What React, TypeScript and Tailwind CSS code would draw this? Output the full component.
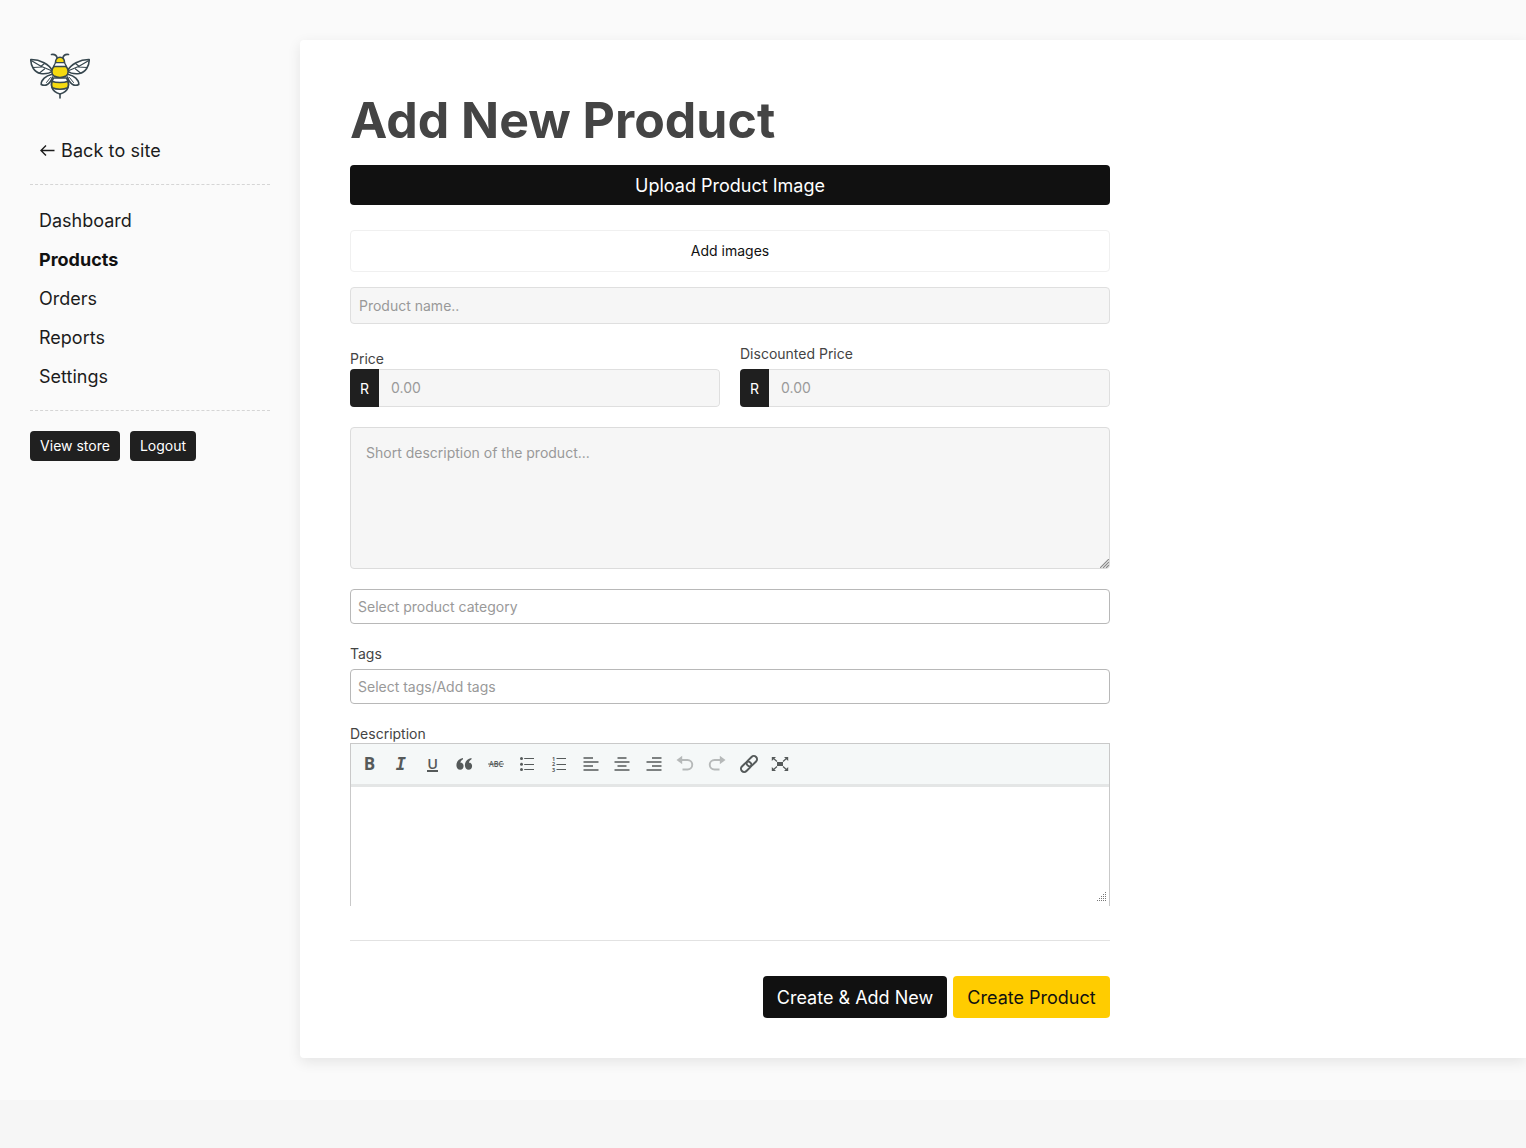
import type { ReactNode } from "react";

const navItems = ["Dashboard", "Products", "Orders", "Reports", "Settings"];

function BeeLogo() {
  return (
    <svg
      width="60"
      height="46"
      viewBox="0 0 60 46"
      fill="none"
      stroke="#37474f"
      strokeWidth="1.600"
      strokeLinecap="round"
      strokeLinejoin="round"
      aria-label="Bee"
    >
      <path d="M27.200 5C26.500 2.500 24.500 1 21.500 1.500M32.800 5C33.500 2.500 35.500 1 38.500 1.500" />
      <path d="M22.500 18C19.500 11.500 10 6.300 .8 6.500C.6 13 4.500 19.500 10.500 20.500C15 21 19.500 20.500 22.500 18Z" fill="#fff" />
      <path d="M37.500 18C40.500 11.500 50 6.300 59.200 6.500C59.400 13 55.500 19.500 49.500 20.500C45 21 40.500 20.500 37.500 18Z" fill="#fff" />
      <path d="M2 8L11 13.300L21 17.500M11 13.300L14.500 10.500M3 14.500L12 14M9.500 20L14.500 16M58 8L49 13.300L39 17.500M49 13.300L45.500 10.500M57 14.500L48 14M50.500 20L45.500 16" strokeWidth="1.200" />
      <path d="M21.500 21.500C16 22.500 11 27 11.200 31.500C15.500 33.700 20.500 31 22.500 24M38.500 21.500C44 22.500 49 27 48.800 31.500C44.500 33.700 39.500 31 37.500 24" fill="#fff" />
      <path d="M20.500 24.500L16.500 29.500M39.500 24.500L43.500 29.500" strokeWidth="1" />
      <path d="M30 45V41" />
      <path d="M23.500 25C20 31 20.500 38.500 30 41C39.500 38.500 40 31 36.500 25Z" fill="#fff" />
      <path d="M22 28.200C26 30 34 30 38 28.200C38.700 31 38.500 33 37.700 34.700C33.500 36.700 26.500 36.700 22.300 34.700C21.500 33 21.300 31 22 28.200Z" fill="#f5da10" />
      <path d="M24 13.300C21.200 16 21 21 24 23C27.500 24.800 32.500 24.800 36 23C39 21 38.800 16 36 13.300Z" fill="#f5da10" />
      <path d="M25.500 9.700C25.500 6.300 27.200 4.300 30 4.300S34.500 6.300 34.500 9.700Z" fill="#f5da10" />
      <path d="M25.500 9.700H34.500L36.500 13.500H23.500Z" fill="#fff" strokeWidth="1.300" />
    </svg>
  );
}

function Glyph({ children, muted = false }: { children: ReactNode; muted?: boolean }) {
  return (
    <button
      type="button"
      className={`flex h-8 w-[31.6px] shrink-0 items-center justify-center ${muted ? "text-[#b6b9b9]" : "text-[#555a5a]"}`}
    >
      <svg
        width="20"
        height="20"
        viewBox="0 0 20 20"
        fill="none"
        stroke="currentColor"
        strokeWidth="1.700"
        className="overflow-visible"
      >
        {children}
      </svg>
    </button>
  );
}

function LetterGlyph({ letter, className }: { letter: string; className: string }) {
  return (
    <button type="button" className="flex h-8 w-[31.6px] shrink-0 items-center justify-center text-[#555a5a]">
      <span className={className}>{letter}</span>
    </button>
  );
}

function Toolbar() {
  return (
    <div className="flex h-[43px] items-center border-b-[3px] border-[#e4e6e6] bg-[#f5f8f8] pl-[2.600px]">
      <LetterGlyph letter="B" className="font-['Open_Sans',sans-serif] text-[17px] leading-6 font-bold" />
      <LetterGlyph letter="I" className="font-['DejaVu_Sans_Mono',monospace] text-[17px] leading-6 font-bold italic" />
      <LetterGlyph
        letter="U"
        className="mt-px h-[14px] border-b-2 border-[#555a5a] font-['Open_Sans',sans-serif] text-[14.5px] leading-[11px] font-semibold"
      />
      <Glyph>
        <path
          d="M9 4V5.200C7.500 6 6.600 7.300 6.400 8.700C8.300 8.400 9.600 9.900 9.600 11.900C9.600 14.200 8.200 15.700 6.200 15.700C3.900 15.700 2.400 13.800 2.400 11.200C2.400 7.500 5 4.700 9 4ZM17.500 4V5.200C16 6 15.100 7.300 14.900 8.700C16.800 8.400 18.100 9.900 18.100 11.900C18.100 14.200 16.700 15.700 14.700 15.700C12.400 15.700 10.900 13.800 10.900 11.200C10.900 7.500 13.500 4.700 17.500 4Z"
          fill="currentColor"
          stroke="none"
        />
      </Glyph>
      <Glyph>
        <text x="10" y="12.800" textAnchor="middle" fontFamily="Open Sans" fontWeight="600" fontSize="8" textLength="14" lengthAdjust="spacingAndGlyphs" fill="currentColor" stroke="none">ABC</text>
        <path d="M2 10H18" strokeWidth="0.900" />
      </Glyph>
      <Glyph>
        <path d="M7.200 4.500H17M7.200 10.500H17M7.200 15.500H17" strokeWidth="1.100" />
        <g fill="currentColor" stroke="none">
          <circle cx="4.500" cy="4.500" r="1.500" />
          <circle cx="4.500" cy="10.300" r="1.500" />
          <circle cx="4.500" cy="15.500" r="1.500" />
        </g>
      </Glyph>
      <Glyph>
        <path d="M7.500 4.500H17M7.500 10.500H17M7.500 15.500H17" strokeWidth="1.100" />
        <g fill="currentColor" stroke="none" fontFamily="Open Sans" fontWeight="700" fontSize="5.500">
          <text x="3" y="6.500">1</text>
          <text x="3" y="12.200">2</text>
          <text x="3" y="17.900">3</text>
        </g>
      </Glyph>
      <Glyph>
        <path d="M2.500 4H12M2.500 8H17.500M2.500 12H12M2.500 16H17.500" />
      </Glyph>
      <Glyph>
        <path d="M5.500 4H14.500M2.500 8H17.500M5.500 12H14.500M2.500 16H17.500" />
      </Glyph>
      <Glyph>
        <path d="M8 4H17.500M2.500 8H17.500M8 12H17.500M2.500 16H17.500" />
      </Glyph>
      <Glyph muted>
        <path d="M6 6H12.500A4.700 4.700 0 0 1 12.500 15.500H7.500" strokeWidth="1.900" />
        <path d="M7.200 1.800V10.200L1.500 6Z" fill="currentColor" stroke="none" />
      </Glyph>
      <Glyph muted>
        <path d="M14 6H7.500A4.700 4.700 0 0 0 7.500 15.500H12.500" strokeWidth="1.900" />
        <path d="M12.800 1.800V10.200L18.500 6Z" fill="currentColor" stroke="none" />
      </Glyph>
      <Glyph>
        <g transform="rotate(-45 10 10)" strokeWidth="2">
          <rect x="0" y="6.800" width="12" height="6.400" rx="3.200" />
          <rect x="8" y="6.800" width="12" height="6.400" rx="3.200" />
        </g>
      </Glyph>
      <Glyph>
        <path d="M3 4L7 7.500M17 4L13 7.500M3 16L7 12.500M17 16L13 12.500" strokeWidth="1.200" />
        <path d="M7 8H13V12H7ZM1.800 3H6L1.800 7ZM18.200 3H14L18.200 7ZM1.800 17H6L1.800 13ZM18.200 17H14L18.200 13Z" fill="currentColor" stroke="none" />
      </Glyph>
    </div>
  );
}

function PriceField({ label, className }: { label: string; className: string }) {
  return (
    <div className="flex flex-1 flex-col">
      <label className={`h-[15px] text-sm leading-5 ${className}`}>{label}</label>
      <div className="mt-auto flex h-[38px] overflow-hidden rounded">
        <span className="flex w-[29px] items-center justify-center bg-[#1f1f1f] pt-0.5 text-sm text-white">R</span>
        <span className="flex flex-1 items-center rounded-r border border-l-0 border-[#dfdfdf] bg-[#f6f6f6] pl-3 text-sm text-[#9a9a9a]">
          0.00
        </span>
      </div>
    </div>
  );
}

function SelectBox({ text }: { text: string }) {
  return (
    <div className="flex h-[35px] items-center rounded border border-[#b8b8b8] bg-white pl-[7px] text-sm text-[#999]">
      {text}
    </div>
  );
}

function ResizeGrip() {
  return (
    <svg width="10" height="10" viewBox="0 0 10 10" stroke="#777" strokeWidth="1" strokeDasharray="1 1">
      <path d="M8 .5H10M6 2.500H10M4 4.500H10M2 6.500H10M0 8.500H10" />
    </svg>
  );
}

export default function App() {
  return (
    <div className="h-[1148px] w-[1526px] overflow-hidden bg-[#f6f6f6] font-['Inter',sans-serif] text-[#444]">
      <div className="flex h-[1100px] bg-[#fafafa] pt-10">
        <aside className="w-[300px] shrink-0 px-[30px] pt-[13px] text-lg text-[#1c1c1c]">
          <BeeLogo />
          <a className="mt-[38px] flex h-[27px] items-center pl-[9px]">
            <svg width="16" height="16" viewBox="0 0 16 16" fill="none" stroke="currentColor" strokeWidth="1.400" className="mr-[6px]">
              <path d="M15.500 7.500H2M7 2.500L2 7.500L7 12.500" />
            </svg>
            <span className="tracking-[0.1px]">Back to site</span>
          </a>
          <div className="mt-[20px] border-t border-dashed border-[#d5d5d5]" />
          <nav className="mt-[16px] flex flex-col pl-[9px]">
            {navItems.map((item) => (
              <a
                key={item}
                className={`flex h-[39px] items-center ${item === "Products" ? "font-bold text-[#111]" : ""}`}
              >
                {item}
              </a>
            ))}
          </nav>
          <div className="mt-[14px] border-t border-dashed border-[#d5d5d5]" />
          <div className="mt-5 flex gap-2.5 text-sm text-white">
            <button className="h-[30px] w-[90px] rounded bg-[#202020]">View store</button>
            <button className="h-[30px] w-[66px] rounded bg-[#202020]">Logout</button>
          </div>
        </aside>

        <main className="h-[1018px] flex-1 rounded-l bg-white pl-[50px] pt-[50px] shadow-[0_4px_14px_rgba(0,0,0,0.09)]">
          <div className="flex w-[760px] flex-col">
            <h1 className="h-[75px] text-[50px] leading-[60px] font-bold text-[#444]">Add New Product</h1>
            <button className="h-10 rounded bg-[#111] pt-0.5 text-lg text-white">Upload Product Image</button>
            <button className="mt-[25px] h-[42px] rounded border border-[#f0f0f0] bg-white text-sm text-[#111]">
              Add images
            </button>
            <div className="mt-[15px] flex h-[37px] items-center rounded border border-[#dfdfdf] bg-[#f6f6f6] pl-2 text-sm text-[#999]">
              Product name..
            </div>
            <div className="mt-5 flex h-[63px] gap-5">
              <PriceField label="Price" className="mt-[5px]" />
              <PriceField label="Discounted Price" className="" />
            </div>
            <div className="relative mt-5 h-[142px]">
              <textarea
                className="block h-full w-full resize-none rounded border border-[#dcdcdc] bg-[#f6f6f6] px-[15px] py-[15px] text-sm leading-5 placeholder:text-[#999]"
                placeholder="Short description of the product..."
              />
              <svg
                width="9"
                height="9"
                viewBox="0 0 9 9"
                stroke="#8a8a8a"
                strokeWidth="1.200"
                className="pointer-events-none absolute right-px bottom-px"
              >
                <path d="M0 9L9 0M3 9L9 3M6 9L9 6" />
              </svg>
            </div>
            <div className="mt-5">
              <SelectBox text="Select product category" />
            </div>
            <label className="mt-5 h-[25px] text-sm leading-5">Tags</label>
            <SelectBox text="Select tags/Add tags" />
            <label className="mt-5 h-[19px] text-sm leading-5">Description</label>
            <div className="flex h-[163px] flex-col border-x border-t border-[#c9c9c9] bg-white">
              <Toolbar />
              <div className="flex flex-1 items-end justify-end pr-[2px] pb-[4px]">
                <ResizeGrip />
              </div>
            </div>
            <hr className="mt-[34px] border-t border-[#e2e2e2]" />
            <div className="mt-[35px] flex justify-end gap-[6px] text-lg">
              <button className="h-[42px] w-[184px] rounded bg-[#111] pt-0.5 text-white">Create &amp; Add New</button>
              <button className="h-[42px] w-[157px] rounded bg-[#fc0] pt-0.5 text-[#111]">Create Product</button>
            </div>
          </div>
        </main>
      </div>
    </div>
  );
}
